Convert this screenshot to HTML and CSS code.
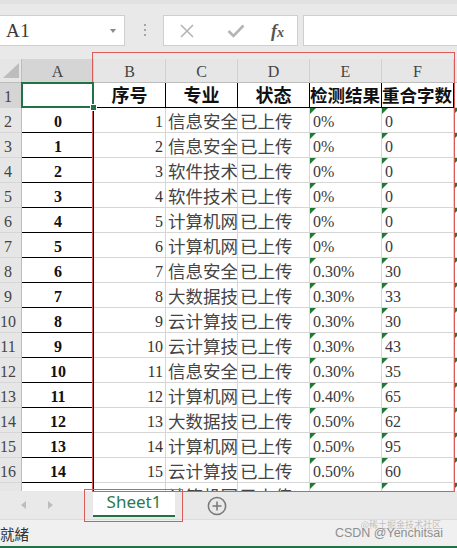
FILE: index.html
```html
<!DOCTYPE html>
<html lang="zh">
<head>
<meta charset="utf-8">
<title>Sheet1</title>
<link rel="stylesheet" href="styles.css">
</head>
<body>
<div class="app">
  <div class="toolbar">
    <div class="namebox"><span class="ref">A1</span><span class="caret"></span></div>
    <div class="grip"><i></i><i></i><i></i></div>
    <div class="fbtns">
      <svg class="ico" width="16" height="16" viewBox="0 0 16 16"><path d="M2 2 L14 14 M14 2 L2 14" stroke="#b4b4b4" stroke-width="1.6" fill="none"/></svg>
      <svg class="ico" width="18" height="14" viewBox="0 0 18 14"><path d="M1.5 7 L6.5 12 L16.5 1.5" stroke="#b4b4b4" stroke-width="2.6" fill="none"/></svg>
      <span class="fx">f<span class="fxx">x</span></span>
    </div>
    <div class="finput"></div>
  </div>

  <div class="sheet">
    <div class="grid">
      <div class="cor"><svg width="22" height="24" viewBox="0 0 22 24"><polygon points="3,19 19,19 19,4" fill="#bdbdbd"/></svg></div>
      <div class="ch sel">A</div><div class="ch">B</div><div class="ch">C</div><div class="ch">D</div><div class="ch">E</div><div class="ch">F</div><div class="ch"></div>

      <div class="rh sel">1</div><div class="c a cur"></div><div class="c h">序号</div><div class="c h">专业</div><div class="c h">状态</div><div class="c h l">检测结果</div><div class="c h l">重合字数</div><div class="c"></div>

      <div class="rh">2</div><div class="c a">0</div><div class="c n">1</div><div class="c t">信息安全</div><div class="c t">已上传</div><div class="c v w">0%</div><div class="c v w">0</div><div class="c w"></div>
      <div class="rh">3</div><div class="c a">1</div><div class="c n">2</div><div class="c t">信息安全</div><div class="c t">已上传</div><div class="c v w">0%</div><div class="c v w">0</div><div class="c w"></div>
      <div class="rh">4</div><div class="c a">2</div><div class="c n">3</div><div class="c t">软件技术</div><div class="c t">已上传</div><div class="c v w">0%</div><div class="c v w">0</div><div class="c w"></div>
      <div class="rh">5</div><div class="c a">3</div><div class="c n">4</div><div class="c t">软件技术</div><div class="c t">已上传</div><div class="c v w">0%</div><div class="c v w">0</div><div class="c w"></div>
      <div class="rh">6</div><div class="c a">4</div><div class="c n">5</div><div class="c t">计算机网</div><div class="c t">已上传</div><div class="c v w">0%</div><div class="c v w">0</div><div class="c w"></div>
      <div class="rh">7</div><div class="c a">5</div><div class="c n">6</div><div class="c t">计算机网</div><div class="c t">已上传</div><div class="c v w">0%</div><div class="c v w">0</div><div class="c w"></div>
      <div class="rh">8</div><div class="c a">6</div><div class="c n">7</div><div class="c t">信息安全</div><div class="c t">已上传</div><div class="c v w">0.30%</div><div class="c v w">30</div><div class="c w"></div>
      <div class="rh">9</div><div class="c a">7</div><div class="c n">8</div><div class="c t">大数据技</div><div class="c t">已上传</div><div class="c v w">0.30%</div><div class="c v w">33</div><div class="c w"></div>
      <div class="rh">10</div><div class="c a">8</div><div class="c n">9</div><div class="c t">云计算技</div><div class="c t">已上传</div><div class="c v w">0.30%</div><div class="c v w">30</div><div class="c w"></div>
      <div class="rh">11</div><div class="c a">9</div><div class="c n">10</div><div class="c t">云计算技</div><div class="c t">已上传</div><div class="c v w">0.30%</div><div class="c v w">43</div><div class="c w"></div>
      <div class="rh">12</div><div class="c a">10</div><div class="c n">11</div><div class="c t">信息安全</div><div class="c t">已上传</div><div class="c v w">0.30%</div><div class="c v w">35</div><div class="c w"></div>
      <div class="rh">13</div><div class="c a">11</div><div class="c n">12</div><div class="c t">计算机网</div><div class="c t">已上传</div><div class="c v w">0.40%</div><div class="c v w">65</div><div class="c w"></div>
      <div class="rh">14</div><div class="c a">12</div><div class="c n">13</div><div class="c t">大数据技</div><div class="c t">已上传</div><div class="c v w">0.50%</div><div class="c v w">62</div><div class="c w"></div>
      <div class="rh">15</div><div class="c a">13</div><div class="c n">14</div><div class="c t">计算机网</div><div class="c t">已上传</div><div class="c v w">0.50%</div><div class="c v w">95</div><div class="c w"></div>
      <div class="rh">16</div><div class="c a">14</div><div class="c n">15</div><div class="c t">云计算技</div><div class="c t">已上传</div><div class="c v w">0.50%</div><div class="c v w">60</div><div class="c w"></div>
      <div class="rh">17</div><div class="c a">15</div><div class="c n">16</div><div class="c t">计算机网</div><div class="c t">已上传</div><div class="c v w">0.50%</div><div class="c v w">71</div><div class="c w"></div>
    </div>
  </div>

  <div class="tabbar">
    <div class="nav"><span class="arr arr-l"></span><span class="arr arr-r"></span></div>
    <div class="tab">Sheet1</div>
    <div class="add">
      <svg width="20" height="20" viewBox="0 0 20 20"><circle cx="10" cy="10" r="8.6" stroke="#777" stroke-width="1.5" fill="none"/><path d="M10 5.5 V14.5 M5.5 10 H14.5" stroke="#777" stroke-width="1.5"/></svg>
    </div>
  </div>

  <div class="status">
    <span class="ready">就緒</span>
    <span class="wm">CSDN @Yenchitsai<span class="wm2">@稀土掘金技术社区</span></span>
  </div>
  <div class="accent"></div>

  <div class="mark mark-sheet"></div>
  <div class="mark mark-tab"></div>
</div>
</body>
</html>
```

FILE: styles.css
```css
html, body {
  margin: 0;
  padding: 0;
  overflow: hidden;
  background: #ffffff;
}

.app {
  position: relative;
  width: 457px;
  height: 548px;
  display: flex;
  flex-direction: column;
  font-family: "Liberation Serif", "Noto Sans CJK SC", serif;
  overflow: hidden;
}

/* ---------- formula toolbar ---------- */
.toolbar {
  height: 59px;
  flex: none;
  box-sizing: border-box;
  background: #e9e9e9;
  border-top: 4px solid #e1e1e1;
  padding-top: 11px;
  display: flex;
  align-items: flex-start;
}

.namebox {
  width: 125px;
  height: 31px;
  box-sizing: border-box;
  background: #fff;
  border: 1px solid #cfcfcf;
  border-left: none;
  display: flex;
  align-items: center;
  justify-content: space-between;
  padding: 0 8px 0 6px;
}

.ref {
  font-family: "Liberation Serif", serif;
  font-size: 19px;
  color: #3a3a3a;
  letter-spacing: 0.5px;
}

.caret {
  width: 0;
  height: 0;
  border-left: 3.5px solid transparent;
  border-right: 3.5px solid transparent;
  border-top: 4px solid #8a8a8a;
}

.grip {
  width: 2px;
  margin: 9px 17px 0 19px;
  display: flex;
  flex-direction: column;
  gap: 3px;
}

.grip i {
  display: block;
  width: 2px;
  height: 2px;
  background: #a5a5a5;
}

.fbtns {
  width: 135px;
  height: 31px;
  box-sizing: border-box;
  background: #fff;
  border: 1px solid #cfcfcf;
  display: flex;
  align-items: center;
  padding-left: 15px;
}

.fbtns .ico:nth-child(2) {
  margin-left: 32px;
}

.fx {
  margin-left: 26px;
  font-family: "Liberation Serif", serif;
  font-style: italic;
  font-weight: bold;
  font-size: 18px;
  color: #555;
  line-height: 1;
}

.fxx {
  font-size: 14px;
}

.finput {
  flex: 1;
  height: 31px;
  margin-left: 5px;
  box-sizing: border-box;
  background: #fff;
  border: 1px solid #cfcfcf;
  border-right: none;
}

/* ---------- sheet ---------- */
.sheet {
  height: 432px;
  flex: none;
  overflow: hidden;
  background: #fff;
}

.grid {
  display: grid;
  grid-template-columns: 22px repeat(6, 72px) 1fr;
  grid-template-rows: 24px;
  grid-auto-rows: 25px;
}

.cor {
  background: #e6e6e6;
  border-right: 1px solid #bdbdbd;
  border-bottom: 1px solid #bdbdbd;
  box-sizing: border-box;
  overflow: hidden;
}

.cor svg {
  display: block;
}

.ch {
  background: #e6e6e6;
  box-sizing: border-box;
  border-right: 1px solid #d2d2d2;
  border-bottom: 1px solid #bdbdbd;
  display: flex;
  align-items: center;
  justify-content: center;
  padding-top: 2px;
  font-size: 16px;
  color: #444;
}

.ch.sel,
.rh.sel {
  background: #d5d5d5;
}

.rh {
  background: #e6e6e6;
  box-sizing: border-box;
  border-right: 1px solid #bdbdbd;
  border-bottom: 1px solid #d6d6d6;
  display: flex;
  align-items: flex-end;
  justify-content: center;
  padding: 0 5px 0 0;
  line-height: 20px;
  font-size: 16px;
  color: #444;
}

.c {
  position: relative;
  box-sizing: border-box;
  border-right: 1px solid #d6d6d6;
  border-bottom: 1px solid #d6d6d6;
  display: flex;
  align-items: flex-end;
  overflow: hidden;
  white-space: nowrap;
  line-height: 20px;
  padding: 0 2px 0 3px;
  font-size: 16px;
  color: #333;
}

.a {
  border-right-color: #000;
  border-bottom-color: #000;
  justify-content: center;
  font-weight: bold;
  color: #111;
}

.h {
  border-right-color: #000;
  border-bottom-color: #000;
  justify-content: center;
  font-weight: bold;
  font-size: 18px;
  color: #111;
  padding: 0 0 1px 0;
}

.h.l {
  justify-content: flex-start;
  font-size: 17.5px;
}

.n {
  justify-content: flex-end;
}

.t {
  font-size: 17.5px;
  color: #444;
  padding-left: 2px;
  padding-right: 0;
}

.v {
  color: #3a3a3a;
}

.w::before {
  content: "";
  position: absolute;
  left: 0;
  top: 0;
  width: 0;
  height: 0;
  border-top: 6px solid #1f7a35;
  border-right: 6px solid transparent;
}

.cur {
  overflow: visible;
  z-index: 2;
}

.cur::after {
  content: "";
  position: absolute;
  left: -1px;
  top: -1px;
  right: -1px;
  bottom: -1px;
  border: 2px solid #217346;
}

.cur::before {
  content: "";
  position: absolute;
  right: -4px;
  bottom: -4px;
  width: 5px;
  height: 5px;
  background: #217346;
  border: 1px solid #fff;
  z-index: 3;
}

/* ---------- sheet tabs ---------- */
.tabbar {
  height: 28px;
  flex: none;
  background: #e9e9e9;
  display: flex;
  align-items: flex-start;
}

.nav {
  width: 93px;
  height: 28px;
  display: flex;
  align-items: center;
  padding-left: 21px;
  box-sizing: border-box;
  gap: 22px;
}

.arr {
  width: 0;
  height: 0;
  border-top: 4px solid transparent;
  border-bottom: 4px solid transparent;
}

.arr-l {
  border-right: 5px solid #bdbdbd;
}

.arr-r {
  border-left: 5px solid #bdbdbd;
}

.tab {
  width: 82px;
  height: 26px;
  box-sizing: border-box;
  background: #fff;
  border-bottom: 2px solid #217346;
  display: flex;
  align-items: center;
  justify-content: center;
  font-family: "Noto Sans", "Open Sans", sans-serif;
  font-size: 17px;
  color: #2a7a4c;
  padding-bottom: 3px;
}

.add {
  margin-left: 32px;
  margin-top: 5px;
  height: 20px;
}

.add svg {
  display: block;
}

/* ---------- status bar ---------- */
.status {
  position: relative;
  height: 27px;
  flex: none;
  box-sizing: border-box;
  background: #f0f0f0;
  border-top: 1px solid #dcdcdc;
  display: flex;
  align-items: center;
  justify-content: space-between;
  padding-right: 14px;
}

.ready {
  font-family: "Noto Sans CJK TC", "Noto Sans CJK SC", sans-serif;
  font-size: 14.5px;
  color: #333;
}

.wm {
  position: relative;
  font-family: "Liberation Sans", Arial, sans-serif;
  font-size: 12.5px;
  color: #8e8e8e;
}

.wm2 {
  position: absolute;
  right: 2px;
  top: -8px;
  font-family: "Noto Sans CJK SC", sans-serif;
  font-size: 9px;
  color: rgba(150, 150, 150, 0.55);
}

.accent {
  height: 2px;
  flex: none;
  background: #217346;
}

/* ---------- red annotation frames ---------- */
.mark {
  position: absolute;
  box-sizing: border-box;
  border: 1px solid #db5a5a;
  pointer-events: none;
}

.mark-sheet {
  left: 92px;
  top: 52px;
  width: 363px;
  height: 440px;
}

.mark-tab {
  left: 84px;
  top: 489px;
  width: 99px;
  height: 33px;
}
```
